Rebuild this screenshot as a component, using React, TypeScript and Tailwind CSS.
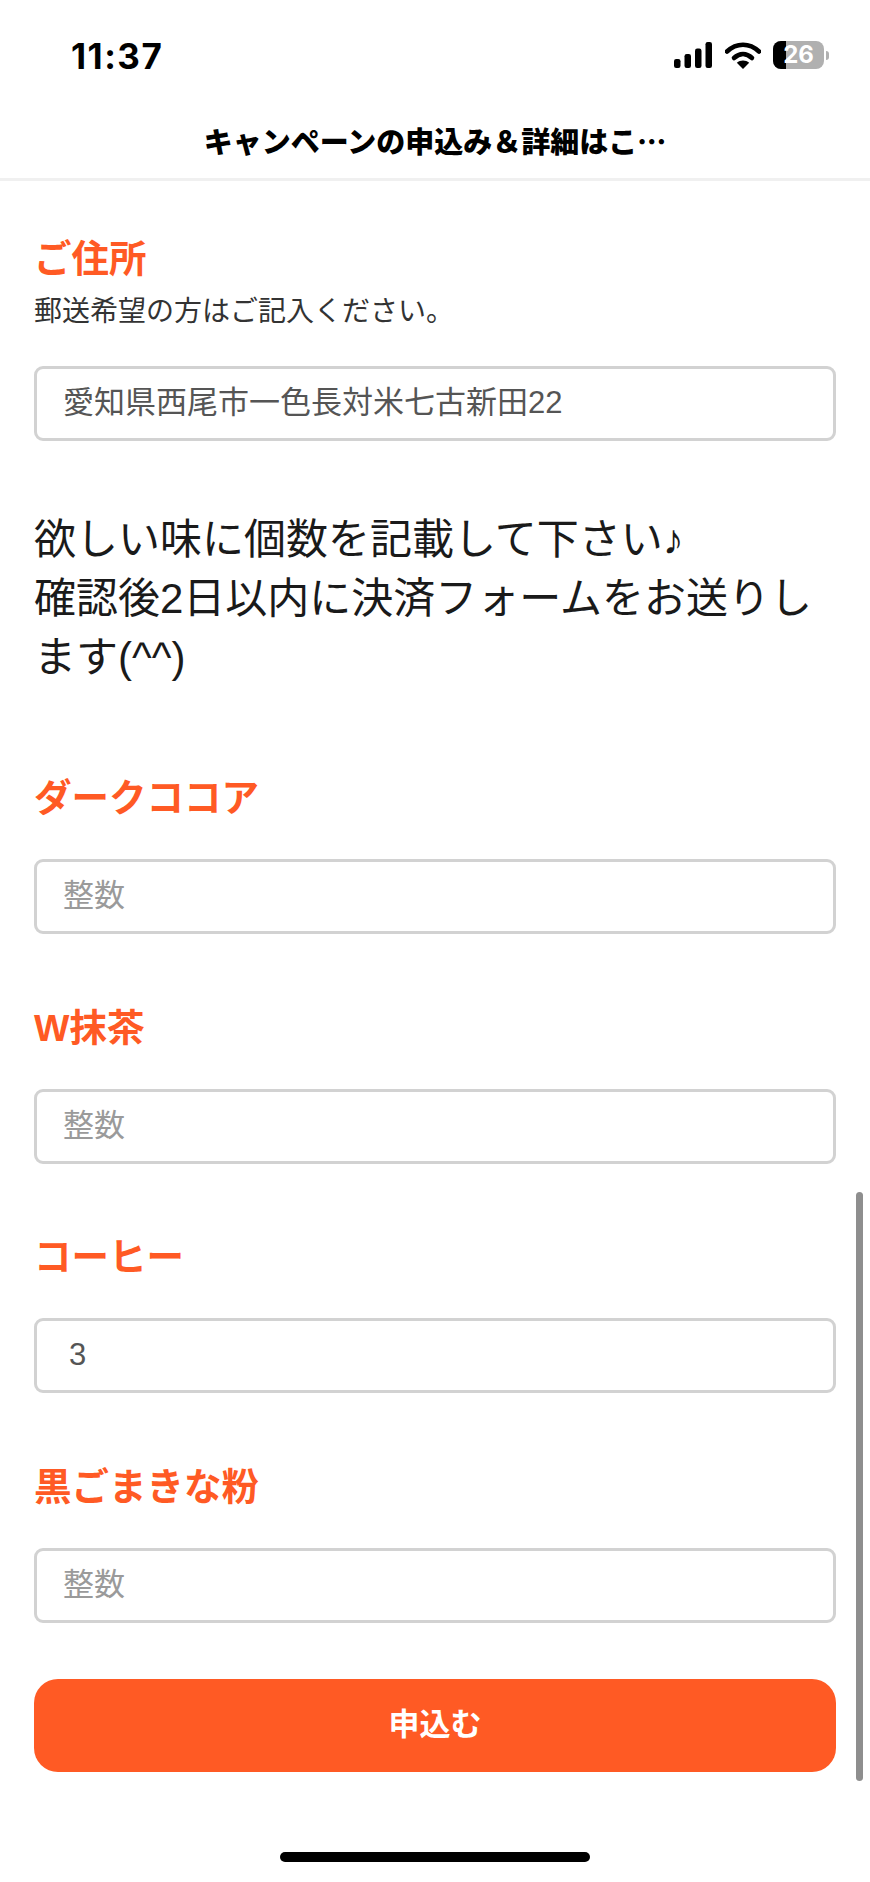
const cjk = { fontFamily: '"Liberation Sans", "Noto Sans CJK JP", sans-serif' };

function StatusIcons() {
  return (
    <div className="flex items-center">
      <svg width="38" height="26" viewBox="0 0 38 26" className="mr-[13px]">
        <rect x="0" y="17" width="6.5" height="9" rx="2.2" fill="#000" />
        <rect x="10.5" y="12" width="6.5" height="14" rx="2.2" fill="#000" />
        <rect x="21" y="6.5" width="6.5" height="19.5" rx="2.2" fill="#000" />
        <rect x="31.5" y="0" width="6.5" height="26" rx="2.2" fill="#000" />
      </svg>
      <svg width="36" height="27" viewBox="0 0 36 27" className="mr-[12px]">
        <path d="M2 9.5C11.5 0.5 24.5 0.5 34 9.5" fill="none" stroke="#000" strokeWidth="4.6" strokeLinecap="round" />
        <path d="M9 16C14.5 10.8 21.5 10.8 27 16" fill="none" stroke="#000" strokeWidth="4.6" strokeLinecap="round" />
        <path d="M18 27L11.8 20.8C15.4 17.6 20.6 17.6 24.2 20.8Z" fill="#000" />
      </svg>
      <div className="relative h-[28px] w-[51px] rounded-[8px] bg-[#b0b0b0]">
        <div className="absolute inset-y-0 left-0 w-[13px] rounded-l-[8px] bg-black" />
        <div className="relative flex h-full items-center justify-center text-[24px] font-bold leading-none text-white" style={{ fontFamily: '"Inter", sans-serif' }}>
          26
        </div>
      </div>
      <div className="ml-[2px] h-[9px] w-[3px] rounded-r-full bg-[#b0b0b0]" />
    </div>
  );
}

function Field({ label, value, placeholder }: { label: string; value?: string; placeholder?: string }) {
  return (
    <div>
      <div className="text-[37.5px] font-bold leading-[49px] text-[#ff5a24]">{label}</div>
      <div className="mt-[36px] flex h-[75px] items-center rounded-[9px] border-[3px] border-[#d2d2d2] bg-white pl-[26px] text-[31px]">
        {value ? <span className="pl-[6px] text-[#555555]">{value}</span> : <span className="text-[#9a9a9a]">{placeholder}</span>}
      </div>
    </div>
  );
}

export default function App() {
  return (
    <div className="relative h-[1882px] w-[870px] overflow-hidden bg-white text-black" style={cjk}>
      <div className="flex h-[100px] items-start justify-between pl-[71px] pr-[41px] pt-[37px]">
        <div className="text-[35px] font-bold leading-[38px] tracking-[1.5px]" style={{ fontFamily: '"Inter", sans-serif' }}>
          11:37
        </div>
        <div className="pt-[4px]">
          <StatusIcons />
        </div>
      </div>
      <div className="flex h-[81px] items-start justify-center border-b-[3px] border-[#f0f0f0] pt-[22px]">
        <div className="text-[29px] font-black leading-[36px]" style={{ fontFamily: '"Noto Sans CJK JP", sans-serif' }}>
          キャンペーンの申込み＆詳細はこ…
        </div>
      </div>

      <div className="px-[34px] pt-[54px]">
        <div className="text-[37.5px] font-bold leading-[49px] text-[#ff5a24]">ご住所</div>
        <div className="mt-[10px] text-[28px] leading-[36px] text-[#333333]">郵送希望の方はご記入ください。</div>
        <div className="mt-[36px] flex h-[75px] items-center rounded-[9px] border-[3px] border-[#d2d2d2] bg-white pl-[26px] text-[31px] text-[#555555]">
          愛知県西尾市一色長対米七古新田22
        </div>

        <div className="mt-[69px] text-[42px] leading-[59px] text-[#1a1a1a]">
          欲しい味に個数を記載して下さい♪
          <br />
          確認後2日以内に決済フォームをお送りします(^^)
        </div>

        <div className="mt-[87px] flex flex-col gap-[69.5px]">
          <Field label="ダークココア" placeholder="整数" />
          <Field label="W抹茶" placeholder="整数" />
          <Field label="コーヒー" value="3" />
          <Field label="黒ごまきな粉" placeholder="整数" />
        </div>

        <button className="mt-[56px] flex h-[93px] w-full items-center justify-center rounded-[24px] bg-[#ff5a24] text-[31px] font-bold text-white">
          申込む
        </button>
      </div>

      <div className="absolute left-[856px] top-[1192px] h-[589px] w-[7px] rounded-full bg-[#8e8e8e]" />
      <div className="absolute left-[280px] top-[1852px] h-[10px] w-[310px] rounded-full bg-black" />
    </div>
  );
}
